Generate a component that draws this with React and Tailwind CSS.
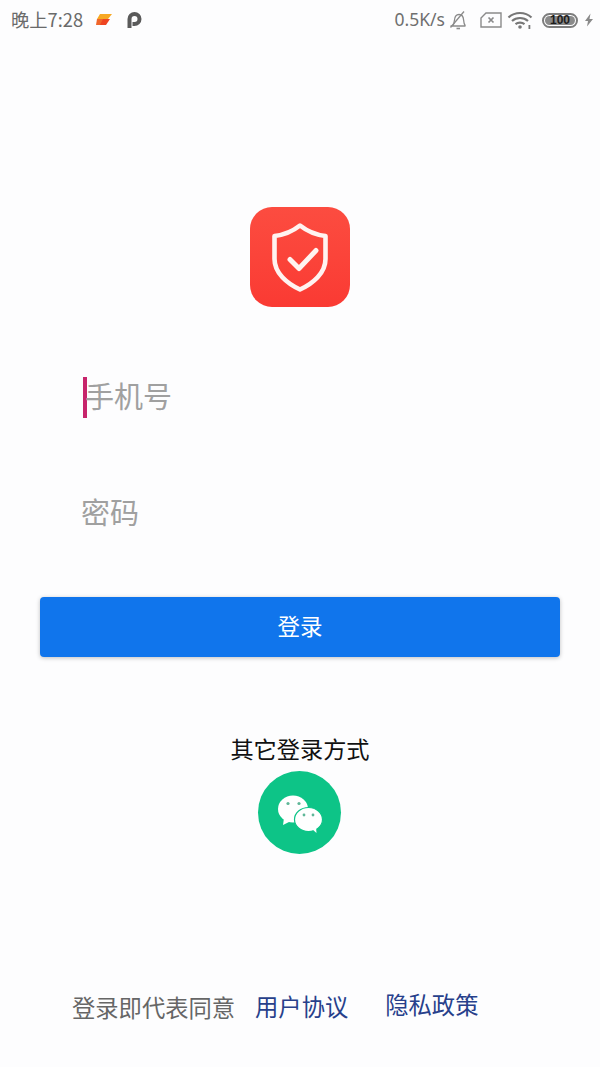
import React from "react";

const cjk = { fontFamily: '"Noto Sans CJK SC", "Noto Sans", sans-serif' };

function StatusIcons() {
  return (
    <div className="flex items-center">
      <span className="-mt-[1px] text-[17.5px] leading-none text-[#6f6f6f]" style={{ fontFamily: '"Noto Sans", sans-serif' }}>0.5K/s</span>
      <svg width="20" height="20" viewBox="0 0 20 20" fill="none" stroke="#8a8a8a" strokeWidth="1.3" className="ml-[3px]">
        <path d="M2.500 16h15M4.500 16c1.500-1.500 1.700-3 1.900-5.500.2-3 1.600-6 4.600-6s4.400 2.500 4.600 5.500c.2 3 .5 4.500 1.800 6" />
        <path d="M2.500 17.500L16 1.500" />
        <path d="M8.500 18.500h3.500" strokeWidth="1.600" />
      </svg>
      <svg width="22" height="18" viewBox="0 0 22 18" fill="none" stroke="#8a8a8a" strokeWidth="1.4" className="ml-[12px]">
        <path d="M6 2h15v14H1V7z" />
        <path d="M8.500 6.500l5 5M13.500 6.500l-5 5" strokeWidth="1.700" />
      </svg>
      <svg width="26" height="20" viewBox="0 0 26 20" fill="none" stroke="#777777" strokeWidth="2.200" className="ml-[5px]">
        <path d="M1.500 7.500c6.500-6 16.500-6 23 0" />
        <path d="M5 11c4.500-4 11.500-4 16 0" />
        <path d="M8.500 14.200c2.500-2 6.500-2 9 0" />
        <circle cx="13" cy="17" r="1.800" fill="#777777" stroke="none" />
        <rect x="21.500" y="15" width="1.800" height="4" fill="#777777" stroke="none" />
      </svg>
      <div className="ml-[9px] flex h-[15px] w-[36px] items-center justify-center rounded-full border-2 border-[#7d7d7d] p-[1px]">
        <div className="flex h-full w-full items-center justify-center rounded-full bg-[#8a8a8a]">
          <span className="text-[12px] font-bold leading-none text-[#1c1c1c]" style={{ fontFamily: '"Liberation Sans", sans-serif' }}>100</span>
        </div>
      </div>
      <svg width="10" height="14" viewBox="0 0 10 14" className="ml-[6px]">
        <path d="M6.500 0.500L1 8h3l-1 5.500L9 6H5.500z" fill="#8a8a8a" />
      </svg>
    </div>
  );
}

function ShieldLogo() {
  return (
    <div className="flex h-[100px] w-[100px] items-center justify-center rounded-[22px] bg-gradient-to-b from-[#fc4c40] to-[#fa3a33]">
      <svg width="60" height="72" viewBox="0 0 60 72" fill="none" stroke="#fff3f0" strokeLinejoin="round">
        <path d="M30 4.500C23 10 13 14 4.500 15V38C4.500 52 17 62.500 30 68.500C43 62.500 55.500 52 55.500 38V15C47 14 37 10 30 4.500Z" strokeWidth="4.600" />
        <path d="M20 38.500L29 47.500L46 29.500" strokeWidth="5" strokeLinecap="round" />
      </svg>
    </div>
  );
}

function WeChat() {
  return (
    <div className="flex h-[83px] w-[83px] items-center justify-center rounded-full bg-[#0dc487]">
      <svg width="46" height="40" viewBox="0 0 46 40">
        <ellipse cx="16" cy="16" rx="15" ry="13.500" fill="#ffffff" />
        <path d="M7 25L6 32l8-4z" fill="#ffffff" />
        <ellipse cx="31.500" cy="26.500" rx="14" ry="12" fill="#ffffff" stroke="#0dc487" strokeWidth="1.200" />
        <path d="M35 36l4.500 4-.5-6z" fill="#ffffff" />
        <circle cx="11" cy="10.500" r="1.600" fill="#5fb798" />
        <circle cx="22" cy="10.500" r="1.600" fill="#5fb798" />
        <circle cx="27" cy="22" r="1.400" fill="#5fb798" />
        <circle cx="36" cy="22" r="1.400" fill="#5fb798" />
      </svg>
    </div>
  );
}

export default function App() {
  return (
    <div className="flex h-[1067px] w-[600px] flex-col overflow-hidden bg-[#fdfdfe]" style={cjk}>
      <div className="flex h-[40px] items-center justify-between pl-[11px] pr-[6px]">
        <div className="flex items-center">
          <span className="-mt-[2px] text-[18.300px] leading-none text-[#6a6a6a]">晚上7:28</span>
          <svg width="16" height="11" viewBox="0 0 16 11" className="ml-[13px]">
            <path d="M4 0h12l-4 5H1z" fill="#f7a823" />
            <path d="M1 5h10l-3 6H0z" fill="#f0662a" />
            <path d="M7 5h7l-4 6H4z" fill="#ee4422" />
          </svg>
          <svg width="15" height="16" viewBox="0 0 15 16" className="ml-[15px]">
            <path d="M0.500 16V7a7 7 0 1 1 7 7H5.500V10h2a3 3 0 1 0-3-3v9z" fill="#5a5a5a" />
          </svg>
        </div>
        <StatusIcons />
      </div>

      <div className="mt-[167px] flex justify-center">
        <ShieldLogo />
      </div>

      <div className="mt-[69px] flex h-[42px] items-center pl-[83px]">
        <div className="h-[41px] w-[4px] bg-[#c7246b]" />
        <span className="-ml-[2px] -mt-[3px] text-[29px] leading-none text-[#a0a0a0]">手机号</span>
      </div>

      <div className="mt-[72px] pl-[81px]">
        <span className="block text-[29px] leading-[42px] text-[#a0a0a0]">密码</span>
      </div>

      <button className="mx-[40px] mt-[65px] flex h-[60px] items-center justify-center rounded-[4px] bg-[#1075ec] pb-[3px] text-[22.500px] text-white shadow-[0_1px_4px_rgba(0,0,0,0.25)]">
        登录
      </button>

      <div className="mt-[75px] text-center text-[23.200px] leading-[32px] text-[#111111]">其它登录方式</div>

      <div className="mt-[7px] flex justify-center pr-[1px]">
        <WeChat />
      </div>

      <div className="mt-[126px] flex h-[50px] items-center text-[23.300px] leading-none">
        <span className="ml-[72px] mt-[5px] text-[#666666]">登录即代表同意</span>
        <span className="ml-[20px] mt-[3px] text-[#27408b]">用户协议</span>
        <span className="ml-[37px] text-[#27408b]">隐私政策</span>
      </div>
    </div>
  );
}
